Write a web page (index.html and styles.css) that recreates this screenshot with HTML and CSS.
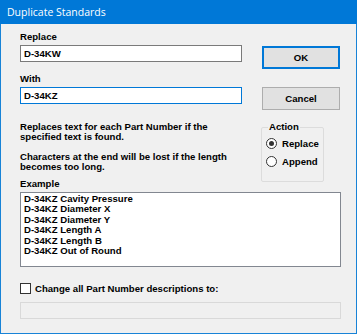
FILE: index.html
```html
<!DOCTYPE html>
<html lang="en">
<head>
    <meta charset="UTF-8">
    <title>Duplicate Standards</title>
    <link rel="stylesheet" href="styles.css">
</head>
<body>

<div class="dialog">
    <div class="titlebar">Duplicate Standards</div>

    <div class="content">
        <div class="top">
            <div class="fields">
                <label class="label" for="replaceText">Replace</label>
                <input class="textbox" id="replaceText" type="text" value="D-34KW">

                <label class="label label-with" for="withText">With</label>
                <input class="textbox focused" id="withText" type="text" value="D-34KZ">

                <p class="note note-first">Replaces text for each Part Number if the<br>specified text is found.</p>
                <p class="note">Characters at the end will be lost if the length<br>becomes too long.</p>
            </div>

            <div class="side">
                <button class="btn btn-default">OK</button>
                <button class="btn btn-cancel">Cancel</button>

                <fieldset class="group">
                    <legend>Action</legend>
                    <label class="radio"><span class="radio-dot checked"></span>Replace</label>
                    <label class="radio"><span class="radio-dot"></span>Append</label>
                </fieldset>
            </div>
        </div>

        <div class="label label-example">Example</div>
        <div class="example-list">
            <div>D-34KZ Cavity Pressure</div>
            <div>D-34KZ Diameter X</div>
            <div>D-34KZ Diameter Y</div>
            <div>D-34KZ Length A</div>
            <div>D-34KZ Length B</div>
            <div>D-34KZ Out of Round</div>
        </div>

        <label class="check-row"><span class="checkbox"></span>Change all Part Number descriptions to:</label>
        <div class="textbox disabled"></div>
    </div>
</div>

</body>
</html>
```

FILE: styles.css
```css
body {
    margin: 0;
    background-color: #ffffff;
    font-family: 'Liberation Sans', Arial, sans-serif;
}

.dialog {
    width: 355px;
    height: 333px;
    border: 1px solid #1883d7;
    border-top: none;
    background-color: #f0f0f0;
}

.titlebar {
    height: 24px;
    background-color: #0078d7; /* Windows 10 accent */
    color: white;
    font-family: 'Open Sans', sans-serif;
    font-size: 10.5px;
    line-height: 24px;
    padding-left: 7px;
    margin: 0 -1px;
}

.content {
    padding: 7px 0 0 19px;
    font-size: 9.6px;
    font-weight: bold;
    color: #000;
}

.top {
    display: flex;
    align-items: flex-start;
}

.fields {
    width: 222px;
    display: flex;
    flex-direction: column;
}

.label {
    display: block;
    line-height: 12px;
    margin-bottom: 2px;
}

.label-with {
    margin-top: 11px;
}

.textbox {
    box-sizing: border-box;
    height: 17px;
    margin: 0;
    border: 1px solid #7a7a7a;
    background-color: white;
    font-family: inherit;
    font-size: 9.6px;
    font-weight: bold;
    padding: 0 3px;
    outline: none;
}

.textbox.focused {
    border-color: #0078d7;
}

.note {
    margin: 10px 0 0 0;
    line-height: 10px;
}

.note-first {
    margin-top: 18px;
}

.side {
    margin-left: 19px;
    width: 80px;
    display: flex;
    flex-direction: column;
    align-items: flex-start;
}

.btn {
    box-sizing: border-box;
    width: 78px;
    height: 23px;
    margin-left: 1px;
    background-color: #e1e1e1;
    border: 1px solid #adadad;
    font-family: inherit;
    font-size: 9.6px;
    font-weight: bold;
    padding: 0;
}

.btn-default {
    margin-top: 15px;
    border: 2px solid #0078d7;
}

.btn-cancel {
    margin-top: 18px;
}

.group {
    box-sizing: border-box;
    width: 63px;
    height: 60px;
    margin: 12px 0 -4px 0;
    padding: 6px 0 0 4px;
    border: 1px solid #dcdcdc;
    border-radius: 2px;
}

.group legend {
    padding: 0 1px;
    margin-left: 2px;
    line-height: 10px;
}

.radio {
    display: flex;
    align-items: center;
    height: 10px;
    margin-bottom: 8px;
}

.radio-dot {
    box-sizing: border-box;
    width: 11px;
    height: 11px;
    border: 1px solid #333;
    border-radius: 50%;
    background-color: white;
    margin-right: 5px;
    display: flex;
    justify-content: center;
    align-items: center;
}

.radio-dot.checked::after {
    content: '';
    width: 5px;
    height: 5px;
    border-radius: 50%;
    background-color: #333;
}

.label-example {
    margin-top: 0;
}

.example-list {
    box-sizing: border-box;
    width: 321px;
    height: 75px;
    border: 1px solid #828790;
    background-color: white;
    padding: 1px 3px;
    line-height: 10.4px;
}

.check-row {
    display: flex;
    align-items: center;
    margin-top: 16px;
    height: 11px;
}

.checkbox {
    box-sizing: border-box;
    width: 11px;
    height: 11px;
    border: 1px solid #333;
    background-color: white;
    margin-right: 4px;
}

.textbox.disabled {
    width: 321px;
    margin-top: 8px;
    border-color: #d9d9d9;
    background-color: #f0f0f0;
    height: 17px;
}
```
